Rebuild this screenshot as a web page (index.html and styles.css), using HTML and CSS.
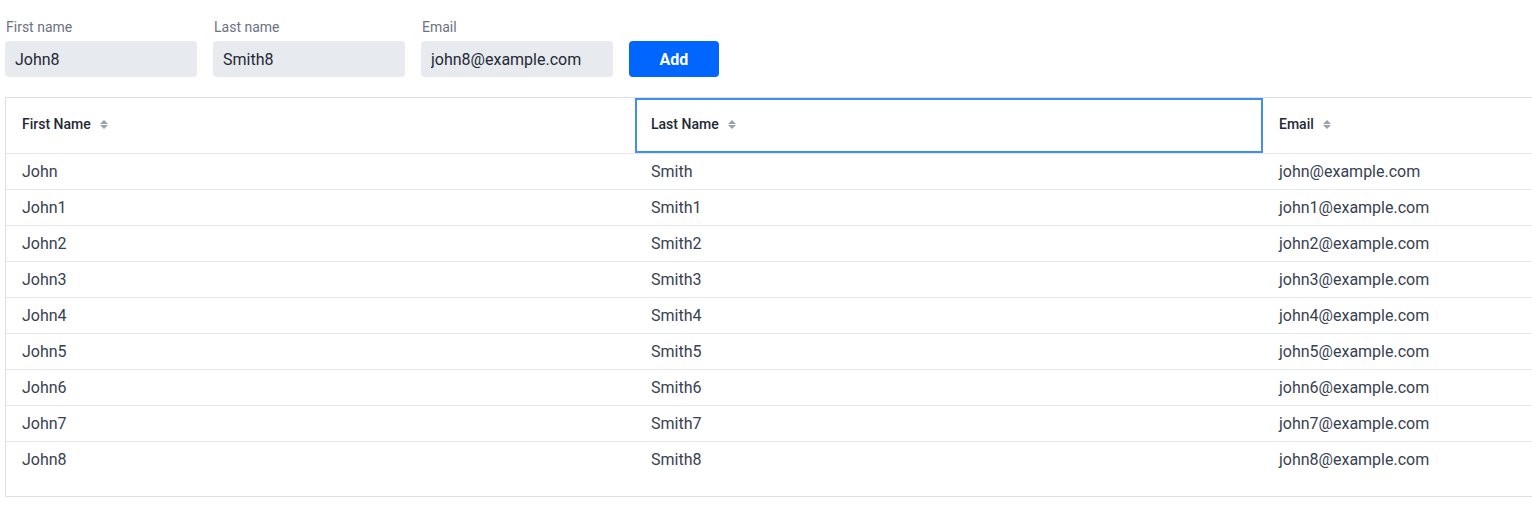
FILE: index.html
```html
<!DOCTYPE html>
<html>
<head>
<meta charset="utf-8">
<link rel="stylesheet" href="styles.css">
</head>
<body>
<div class="page">
  <form class="form">
    <label class="field">
      <span class="label">First name</span>
      <input class="input" value="John8">
    </label>
    <label class="field">
      <span class="label">Last name</span>
      <input class="input" value="Smith8">
    </label>
    <label class="field">
      <span class="label">Email</span>
      <input class="input" value="john8@example.com">
    </label>
    <button type="button" class="btn">Add</button>
  </form>

  <div class="grid">
    <div class="row head">
      <div class="cell hcell"><span>First Name</span><span class="sort"><i class="up"></i><i class="down"></i></span></div>
      <div class="cell hcell focused"><span>Last Name</span><span class="sort"><i class="up"></i><i class="down"></i></span></div>
      <div class="cell hcell"><span>Email</span><span class="sort"><i class="up"></i><i class="down"></i></span></div>
    </div>
    <div class="row"><div class="cell">John</div><div class="cell">Smith</div><div class="cell">john@example.com</div></div>
    <div class="row"><div class="cell">John1</div><div class="cell">Smith1</div><div class="cell">john1@example.com</div></div>
    <div class="row"><div class="cell">John2</div><div class="cell">Smith2</div><div class="cell">john2@example.com</div></div>
    <div class="row"><div class="cell">John3</div><div class="cell">Smith3</div><div class="cell">john3@example.com</div></div>
    <div class="row"><div class="cell">John4</div><div class="cell">Smith4</div><div class="cell">john4@example.com</div></div>
    <div class="row"><div class="cell">John5</div><div class="cell">Smith5</div><div class="cell">john5@example.com</div></div>
    <div class="row"><div class="cell">John6</div><div class="cell">Smith6</div><div class="cell">john6@example.com</div></div>
    <div class="row"><div class="cell">John7</div><div class="cell">Smith7</div><div class="cell">john7@example.com</div></div>
    <div class="row last"><div class="cell">John8</div><div class="cell">Smith8</div><div class="cell">john8@example.com</div></div>
  </div>
</div>
</body>
</html>
```

FILE: styles.css
```css
html, body {
  margin: 0;
  padding: 0;
  overflow: hidden;
  background: #ffffff;
  font-family: Roboto, "Liberation Sans", Arial, sans-serif;
}
.page {
  padding: 17px 0 0 5px;
}
.form {
  display: flex;
  align-items: flex-end;
  gap: 16px;
  margin: 0;
}
.field {
  display: flex;
  flex-direction: column;
  gap: 4px;
}
.label {
  font-size: 14px;
  line-height: 20px;
  color: #6b7280;
  padding-left: 1px;
}
.input {
  box-sizing: border-box;
  width: 192px;
  height: 36px;
  border: none;
  border-radius: 4px;
  background: #e7eaee;
  padding: 0 10px;
  font-family: Roboto, "Liberation Sans", Arial, sans-serif;
  font-size: 16px;
  font-weight: 400;
  color: #1f2937;
  outline: none;
}
.btn {
  width: 90px;
  height: 36px;
  border: none;
  border-radius: 4px;
  background: #0066ff;
  color: #ffffff;
  font-family: Roboto, "Liberation Sans", Arial, sans-serif;
  font-size: 16px;
  font-weight: 700;
  cursor: pointer;
}
.grid {
  margin-top: 20px;
  width: 1900px;
  border: 1px solid #dddfe3;
  padding-bottom: 19px;
}
.row {
  display: flex;
  height: 35px;
  border-bottom: 1px solid #e6e8eb;
}
.row.last {
  border-bottom: none;
}
.row.head {
  height: 55px;
}
.cell {
  box-sizing: border-box;
  width: 629px;
  flex: none;
  padding: 0 16px;
  display: flex;
  align-items: center;
  font-size: 16px;
  color: #374151;
}
.cell:nth-child(2) {
  width: 628px;
}
.hcell {
  font-size: 14px;
  font-weight: 500;
  color: #1f2937;
  gap: 9px;
  padding-bottom: 3px;
}
.focused {
  outline: 2px solid #3f8ef0;
  outline-offset: -2px;
}
.sort {
  display: flex;
  flex-direction: column;
  gap: 1px;
  margin-top: 1px;
}
.sort i {
  display: block;
  width: 0;
  height: 0;
  border-left: 4px solid transparent;
  border-right: 4px solid transparent;
}
.sort .up {
  border-bottom: 4px solid #9aa1ad;
}
.sort .down {
  border-top: 4px solid #9aa1ad;
}
```
